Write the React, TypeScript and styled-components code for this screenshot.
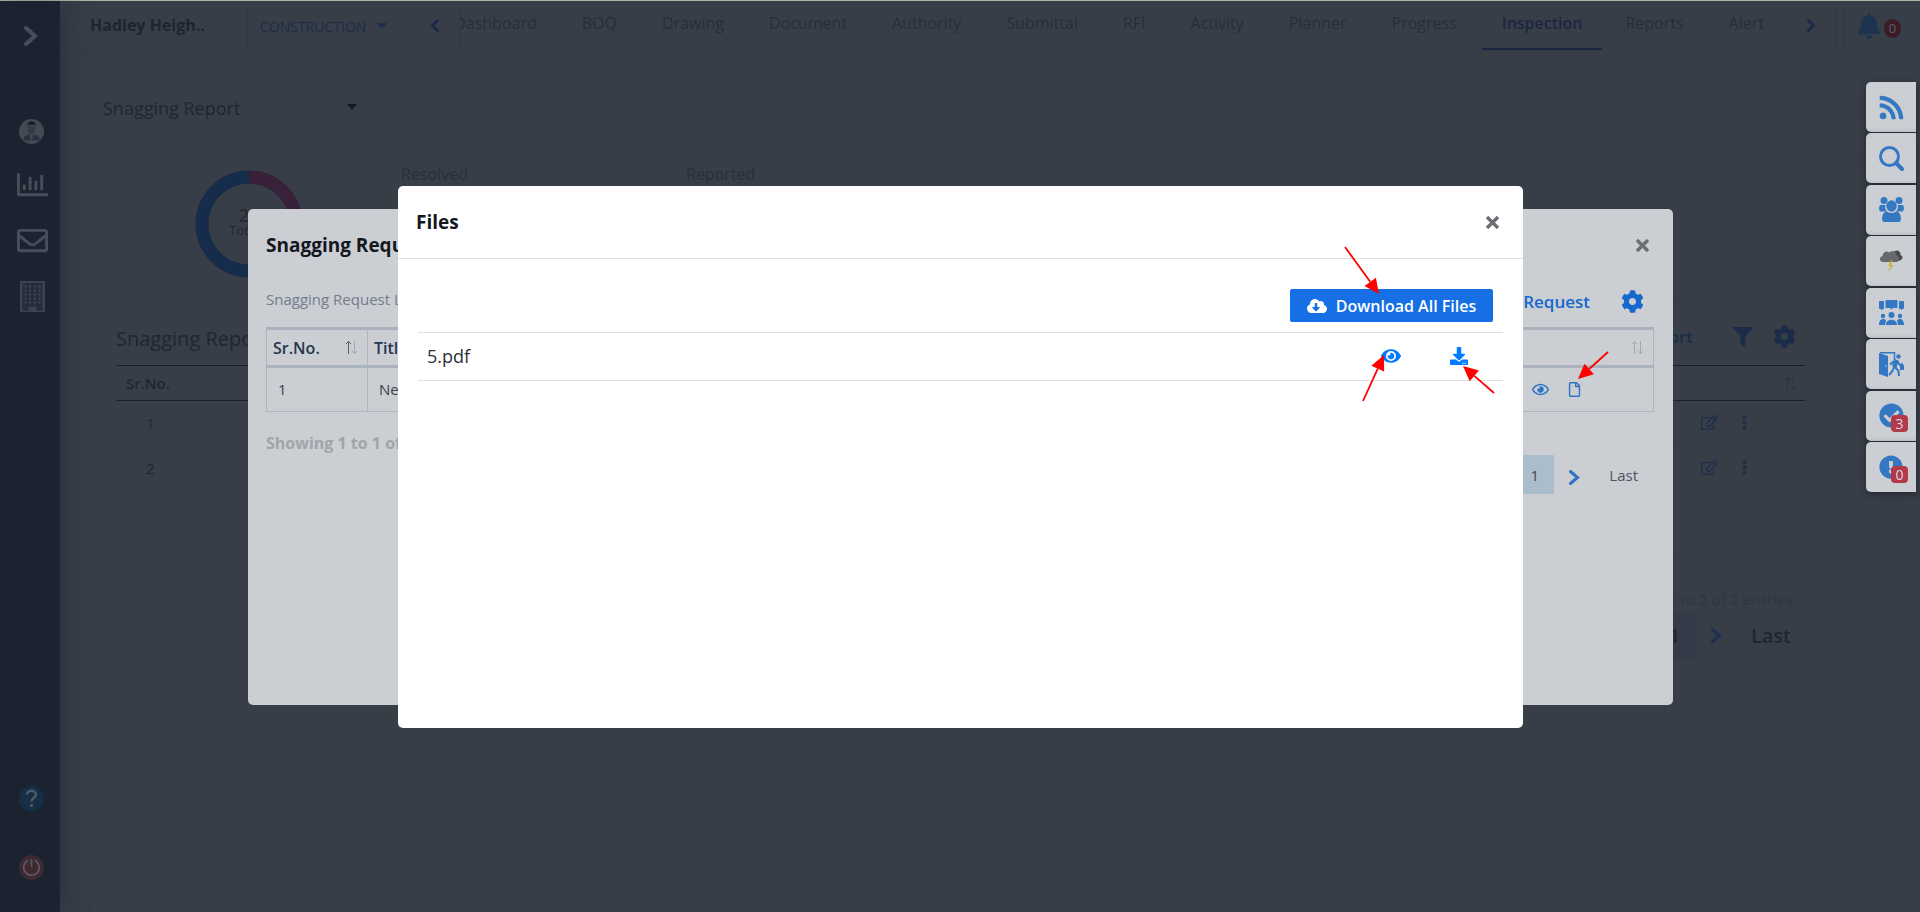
import React from 'react';
import styled, { createGlobalStyle } from 'styled-components';
import {
  FaBell, FaCheckCircle, FaCloudDownloadAlt, FaCog, FaDownload, FaEllipsisV, FaExclamationCircle,
  FaEye, FaFilter, FaRegChartBar, FaRegEdit, FaRegEnvelope, FaRegEye, FaRegFile, FaRss,
} from 'react-icons/fa';

const GlobalStyle = createGlobalStyle`
  *, *::before, *::after { box-sizing: border-box; }
  body { margin: 0; background: #383e48; color: #20262f; font: 400 16px/24px "Open Sans", "Noto Sans", sans-serif; overflow: hidden; }
  button, select { font: inherit; color: inherit; border: 0; background: none; padding: 0; margin: 0; cursor: pointer; }
  h1, h2, h3, p { margin: 0; font: inherit; }
  table { border-collapse: collapse; width: 100%; }
  svg { display: block; flex: none; }
`;

/* ---------- page frame ---------- */
const Page = styled.div`
  display: flex;
  min-height: 100vh;
  border-top: 1px solid #a9b99b;
`;
const Sidebar = styled.nav`
  width: 60px;
  flex: none;
  display: flex;
  flex-direction: column;
  background: #1c2330;
  color: #474e59;
  padding-bottom: 10px;
  box-shadow: 4px 0 28px rgba(20, 26, 36, 0.35);
`;
const SideButton = styled.button<{ $h: number }>`
  height: ${p => p.$h}px;
  width: 64px;
  display: flex;
  align-items: center;
  justify-content: center;
`;
const RoundButton = styled(SideButton)`
  width: 62px;
`;
const MenuToggle = styled(SideButton)`
  width: 60px;
`;
const SideGroup = styled.div`
  display: flex;
  flex-direction: column;
  padding-top: 34px;
`;
const SideFoot = styled(SideGroup)`
  margin-top: auto;
  padding-top: 0;
`;
const Main = styled.main`
  flex: 1;
  min-width: 0;
  display: flex;
  flex-direction: column;
`;

/* ---------- top bar ---------- */
const TopBar = styled.header`
  height: 50px;
  display: flex;
  border-bottom: 1px solid #343a43;
`;
const Project = styled.h1`
  width: 188px;
  padding: 12px 0 0 30px;
  border-right: 1px solid #343a43;
  font-weight: 700;
  color: #1e242e;
`;
const PhaseBox = styled.div`
  width: 162px;
  padding: 0 23px 0 12px;
  display: flex;
  align-items: center;
  color: #1d2c46;
`;
const PhaseSelect = styled.select`
  appearance: none;
  flex: 1;
  height: 48px;
  padding-top: 2px;
  font-size: 14px;
  font-weight: 500;
  outline: none;
`;
const TabArrow = styled.button`
  width: 50px;
  flex: none;
  display: flex;
  align-items: center;
  justify-content: center;
  border: solid #343a43;
  border-width: 0 1px;
  color: #1b2946;
`;
const Tabs = styled.div`
  flex: 1;
  min-width: 0;
  display: flex;
  justify-content: flex-end;
  overflow: hidden;
`;
const Tab = styled.button<{ $active?: boolean }>`
  flex: none;
  height: 50px;
  margin-left: ${p => (p.$active ? 3 : 0)}px;
  padding: ${p => (p.$active ? '0 20px 3px' : '0 22px 3px 23px')};
  border-bottom: ${p => (p.$active ? '3px solid #1b2742' : '3px solid transparent')};
  color: ${p => (p.$active ? '#1b2742' : '#272e38')};
  font-weight: ${p => (p.$active ? 600 : 400)};
`;
const BellBox = styled.button`
  width: 76px;
  margin-left: 8px;
  padding-left: 11px;
  display: flex;
  align-items: center;
  gap: 2px;
  border-left: 1px solid #343a43;
  color: #1d3450;
`;
const BellCount = styled.span`
  width: 17px;
  height: 19px;
  margin-top: 6px;
  border-radius: 9px;
  background: #3c1c27;
  color: #5c5f69;
  font-size: 13px;
  line-height: 19px;
`;

/* ---------- report card ---------- */
const Card = styled.section`
  flex: 1;
  margin: 30px 70px 0 30px;
  border: 1px solid #343a44;
  border-bottom: 0;
  display: flex;
  flex-direction: column;
`;
const CardHead = styled.div`
  height: 51px;
  border-bottom: 1px solid #343a43;
`;
const ReportPicker = styled.div`
  width: 284px;
  height: 50px;
  padding: 0 17px 0 12px;
  display: flex;
  align-items: center;
  border-right: 1px solid #343a43;
`;
const ReportSelect = styled.select`
  appearance: none;
  flex: 1;
  height: 50px;
  padding-top: 2px;
  font-size: 18px;
  outline: none;
`;
const Summary = styled.div`
  height: 166px;
  margin: 0 44px 0 25px;
  padding: 37px 0 0 79px;
  display: flex;
  border-bottom: 1px solid #343a43;
`;
const StatList = styled.div`
  display: flex;
  padding-left: 98px;
`;
const StatLabel = styled.span`
  width: 285px;
  margin-top: -8px;
  font-size: 16px;
  color: #292f39;
`;
const ListHead = styled.div`
  margin: 0 44px 0 25px;
  padding: 9px 9px 0 0;
  height: 66px;
  display: flex;
  align-items: center;
  color: #1b2c48;
`;
const ListTitle = styled.h2`
  flex: 1;
  font-size: 20px;
  color: #20262f;
  padding-top: 4px;
`;
const LinkButton = styled.button<{ $gap: number }>`
  font-size: 17px;
  font-weight: 600;
  margin-right: ${p => p.$gap}px;
`;
const IconButton = styled.button<{ $gap?: number }>`
  display: inline-flex;
  align-items: center;
  justify-content: center;
  margin-left: ${p => p.$gap || 0}px;
`;
const DimTable = styled.table`
  width: auto;
  margin: 0 44px 0 25px;
  font-size: 15px;
  th {
    height: 35px;
    padding: 0 8px 0 10px;
    text-align: left;
    font-weight: 600;
    border: solid #1a202a;
    border-width: 1px 0;
  }
  td {
    height: 45px;
    padding: 0 30px 1px;
    border-bottom: 1px solid #343a43;
  }
  tr:last-child td { border: 0; }
`;
const SortCell = styled.div<{ $end?: boolean }>`
  display: flex;
  align-items: center;
  justify-content: ${p => (p.$end ? 'flex-end' : 'space-between')};
`;
const DimActions = styled.div`
  display: flex;
  justify-content: flex-end;
  align-items: center;
  gap: 19px;
  padding-right: 23px;
  color: #1f2f48;
`;
const ListFoot = styled.div`
  margin: 66px 44px 0 25px;
  padding: 29px 12px 0 0;
  border-top: 1px solid #343a43;
  display: flex;
  flex-direction: column;
  align-items: flex-end;
  gap: 2px;
  font-size: 15px;
  font-weight: 600;
  color: #303741;
`;
const Pager = styled.div<{ $big?: boolean }>`
  display: flex;
  align-items: center;
  justify-content: flex-end;
  height: ${p => (p.$big ? 46 : 39)}px;
  padding-right: ${p => (p.$big ? 2 : 0)}px;
  font-size: ${p => (p.$big ? 20 : 15)}px;
  font-weight: ${p => (p.$big ? 600 : 400)};
  color: ${p => (p.$big ? '#20262f' : '#4e555f')};
`;
const PageNumber = styled.button<{ $big?: boolean }>`
  height: 100%;
  width: ${p => (p.$big ? 43 : 39)}px;
  color: ${p => (p.$big ? '#20262f' : '#3f4751')};
  background: ${p => (p.$big ? '#343a47' : '#abbccb')};
`;
const PageArrow = styled.button<{ $big?: boolean }>`
  padding: ${p => (p.$big ? '0 29px 0 14px' : '6px 29px 0 14px')};
  color: ${p => (p.$big ? '#1c3050' : '#2f74c4')};
`;

/* ---------- dialogs ---------- */
const DialogLayer = styled.div<{ $top: number }>`
  position: fixed;
  inset: 0;
  display: flex;
  justify-content: center;
  align-items: flex-start;
  padding: ${p => p.$top}px 15px 16px 16px;
`;
const RequestDialog = styled.section`
  width: 1425px;
  min-height: 496px;
  border-radius: 5px;
  background: #cbced3;
  padding: 0 19px 0 18px;
`;
const DialogHead = styled.div`
  display: flex;
  align-items: center;
  justify-content: space-between;
  height: 72px;
  color: #14181e;
`;
const DialogTitle = styled.h2`
  font-size: 19px;
  font-weight: 700;
`;
const CloseButton = styled.button`
  width: 13px;
  margin-right: 5px;
  color: #6b6e72;
`;
const RequestTools = styled.div`
  height: 46px;
  display: flex;
  align-items: center;
  padding: 0 10px 5px 0;
  font-size: 15px;
  color: #737d8c;
`;
const RequestLabel = styled.h3`
  flex: 1;
  padding-bottom: 5px;
`;
const BlueTools = styled.div`
  display: flex;
  align-items: center;
  color: #1668cd;
`;
const RequestTable = styled.table`
  table-layout: fixed;
  color: #3b424c;
  font-size: 15px;
  th, td { text-align: left; border: 1px solid #aeb5bd; }
  th {
    height: 38px;
    padding: 0 9px 0 6px;
    font-size: 16px;
    font-weight: 600;
    color: #27374f;
    border-top: 3px solid #aab3bd;
    border-bottom: 3px solid #aab3bd;
  }
  td { height: 45px; padding: 0 11px 1px; }
`;
const NumberCol = styled.col`
  width: 101px;
`;
const ActionCol = styled.col`
  width: 133px;
`;
const Actions = styled.div`
  display: flex;
  align-items: center;
  gap: 18px;
  color: #2f74c4;
`;
const Showing = styled.p`
  padding-top: 19px;
  font-weight: 700;
  color: #a1a4a8;
`;
const RequestPager = styled.div`
  padding: 0 16px 0 0;
`;
const FilesDialog = styled.section`
  position: relative;
  width: 1125px;
  min-height: 542px;
  border-radius: 5px;
  background: #fff;
  color: #14181e;
`;
const FilesHead = styled(DialogHead)`
  height: 73px;
  padding: 0 19px 0 18px;
  border-bottom: 1px solid #dcdfe5;
`;
const FilesBody = styled.div`
  padding: 30px 20px 0;
`;
const FilesBar = styled.div`
  display: flex;
  justify-content: flex-end;
  padding: 0 10px 10px 0;
`;
const DownloadAll = styled.button`
  height: 33px;
  width: 203px;
  display: flex;
  align-items: center;
  justify-content: center;
  gap: 9px;
  border-radius: 2px;
  background: #166fe5;
  color: #fff;
  font-size: 16px;
  font-weight: 600;
`;
const FileTable = styled.table`
  color: #2b3037;
  td {
    height: 48px;
    padding: 0 10px 2px 9px;
    border: solid #dcdfe5;
    border-width: 1px 0;
    font-size: 18px;
  }
`;
const FileActions = styled.div`
  display: flex;
  justify-content: flex-end;
  gap: 49px;
  padding-right: 25px;
  color: #007bff;
`;
const Notes = styled.svg`
  position: absolute;
  top: 0;
  right: -100px;
  z-index: 2;
  pointer-events: none;
`;

/* ---------- quick access rail ---------- */
const Rail = styled.aside`
  position: fixed;
  top: 82px;
  right: 4px;
  height: 410px;
  display: flex;
  flex-direction: column;
  justify-content: space-between;
`;
const RailButton = styled.button`
  position: relative;
  width: 50px;
  height: 50px;
  display: flex;
  align-items: center;
  justify-content: center;
  border-radius: 5px 0 0 5px;
  background: #cbced3;
  color: #3478c3;
  box-shadow: 0 2px 6px rgba(15, 20, 28, 0.5);
`;
const RailCount = styled.span`
  position: absolute;
  right: 8px;
  bottom: 9px;
  width: 17px;
  height: 17px;
  border-radius: 4px;
  background: #b23a4a;
  color: #dcdde2;
  font-size: 14px;
  line-height: 17px;
`;

/* ---------- drawings ---------- */
const Chevron = ({ w, h, stroke, left }: { w: number; h: number; stroke: number; left?: boolean }) => {
  const s = stroke / 2 + 1;
  const a = left ? w - s : s;
  const b = left ? s : w - s;
  return (
    <svg width={w} height={h} fill="none" stroke="currentColor" strokeWidth={stroke} strokeLinecap="round">
      <path d={`M${a} ${s}L${b} ${h / 2}L${a} ${h - s}`} />
    </svg>
  );
};
const Caret = ({ color }: { color: string }) => (
  <svg width="10" height="6" fill={color}><path d="M0 0h10L5 6z" /></svg>
);
const Cross = () => (
  <svg width="13" height="13" stroke="currentColor" strokeWidth="3.4"><path d="M1 1L12 12M12 1L1 12" /></svg>
);
const SortArrows = ({ up, down }: { up: string; down: string }) => (
  <svg width="13" height="15" fill="none" strokeWidth="1">
    <path stroke={up} d="M3.5 14V1.5M1 4L3.5 1.5L6 4" />
    <path stroke={down} d="M9.500 1V13.500M7 11L9.500 13.500L12 11" />
  </svg>
);
const Avatar = () => (
  <svg width="25" height="25" viewBox="0 0 25 25">
    <circle cx="12.500" cy="12.500" r="12.500" fill="#424a55" />
    <path d="M4 21.500c.5-4 3-5 6-6l2.500 3 2.500-3c3 1 5.500 2 6 6z" fill="#2a323e" />
    <path d="M8.800 7h7.400v3.500c0 2.500-1.700 5-3.700 5s-3.700-2.500-3.700-5z" fill="#343c47" />
    <path d="M8.500 7.500c-.5-3.500 1.500-5 4-5s4.500 1.500 4 5l-1-1.800h-6z" fill="#161c26" />
    <path d="M12.500 16.500l1.200 1.500-1.200 4-1.200-4z" fill="#48505b" />
  </svg>
);
const Building = () => (
  <svg width="25" height="31" viewBox="0 0 25 31">
    <path d="M0 0h25v31H0z" fill="#3b434f" />
    <path d="M2.500 2h20v27.500h-6v-4h-8v4h-6z" fill="#252d3a" />
    <g fill="#3f4753">
      {[4.5, 8.500, 12.500, 16.500, 20.500].map(y => [4.500, 9, 14, 18.500].map(x => <rect key={`${x}-${y}`} x={x} y={y} width="2" height="2" />))}
    </g>
  </svg>
);
const Help = () => (
  <svg width="25" height="25" viewBox="0 0 25 25" fill="none">
    <circle cx="12.500" cy="12.500" r="12.500" fill="#172f46" />
    <path d="M8 8.500C8 3.500 17 3.500 17 8.500c0 3.500-4.500 3.500-4.500 7" stroke="#505a66" strokeWidth="2.400" />
    <circle cx="12.500" cy="19.500" r="1.600" fill="#505a66" />
  </svg>
);
const Power = () => (
  <svg width="25" height="25" viewBox="0 0 25 25" fill="none">
    <circle cx="12.500" cy="12.500" r="12.500" fill="#3f2a32" />
    <path d="M9 5.500a7.800 7.800 0 1 0 7 0M12.500 4v8" stroke="#5a5a64" strokeWidth="1.600" />
  </svg>
);
const Donut = () => (
  <svg width="108" height="108" viewBox="0 0 108 108">
    <circle cx="54" cy="54" r="47" fill="none" stroke="#152c4a" strokeWidth="13" />
    <path d="M54 7a47 47 0 0 1 0 94" fill="none" stroke="#382139" strokeWidth="13" />
    <text x="49" y="52" fontSize="18" textAnchor="middle" fill="#20262f">2</text>
    <text x="34" y="65" fontSize="13" fill="#20262f">Total</text>
  </svg>
);
const SearchIcon = () => (
  <svg width="25" height="25" fill="none" stroke="currentColor">
    <circle cx="10.500" cy="10.500" r="9" strokeWidth="3" />
    <path d="M17 17l6 6" strokeWidth="4" strokeLinecap="round" />
  </svg>
);
const PeopleIcon = () => (
  <svg width="25" height="25" viewBox="0 0 25 25" fill="currentColor">
    <circle cx="5" cy="3.500" r="3.500" />
    <circle cx="20" cy="3.500" r="3.500" />
    <path d="M1.500 8h5c-1 3 0 5 1.500 6.500H1.500C-.5 13.500-.3 9 1.500 8zM23.500 8h-5c1 3 0 5-1.500 6.500h6.500c2-1 1.800-5.500 0-6.500z" />
    <ellipse cx="12.500" cy="9" rx="5.200" ry="5.800" />
    <path d="M7.500 14.300c3 2.400 7 2.400 10 0 3.500.7 4.700 5 4.300 8.700 0 1.200-1 2-2.300 2h-14c-1.300 0-2.300-.8-2.300-2-.4-3.700.8-8 4.300-8.700z" />
  </svg>
);
const StormIcon = () => (
  <svg width="25" height="25" viewBox="0 0 25 25">
    <path d="M13 6c1-6 9-6 8.500 0 2.500 1 2.500 3.500 1 4.500L20 12z" fill="#47494c" />
    <path d="M4 13c-4-.5-4-5-.5-6C3.500 3 8 1 10 3.500c3-3 8-.5 7.500 3 3 .5 3.500 6 .5 6.500z" fill="#67696d" />
    <path d="M11.500 11.500l-2 5.500h2.500l-5 8 7.500-9h-3l2-4.500z" fill="#ccae22" />
  </svg>
);
const MeetingIcon = () => (
  <svg width="25" height="25" viewBox="0 0 25 25" fill="currentColor">
    <path d="M7.500 0h10c.6 0 1 .4 1 1v6c0 .6-.4 1-1 1H14l-1.500 1.600L11 8H7.500c-.6 0-1-.4-1-1V1c0-.6.400-1 1-1z" />
    <path d="M1 1h4v8H3.500L2 10.600V9H1c-.6 0-1-.4-1-1V2c0-.6.400-1 1-1zM24 1h-4v8h1.500l1.500 1.600V9h1c.6 0 1-.4 1-1V2c0-.6-.4-1-1-1z" />
    <circle cx="12.500" cy="15" r="3" />
    <circle cx="4" cy="16" r="2.200" />
    <circle cx="21" cy="16" r="2.200" />
    <path d="M7 25c0-7 11-7 11 0zM0 25c0-6.500 5-7 7-4.500L6 25zM25 25c0-6.500-5-7-7-4.500l1 4.500z" />
  </svg>
);
const ExitIcon = () => (
  <svg width="25" height="25" viewBox="0 0 25 25" fill="none" stroke="currentColor">
    <path d="M0 1l9 3v21l-9-3z" fill="currentColor" stroke="none" />
    <path d="M1 .8h14.500V8" strokeWidth="1.500" />
    <circle cx="19.500" cy="4.500" r="2.200" fill="currentColor" stroke="none" />
    <path d="M18 8l-3 7" strokeWidth="4.500" />
    <path d="M15 9l-4 3.500M18 9l3 4 3-1M15 15l-1.500 4-3.500 4M16 15l3.500 4 .5 5" strokeWidth="2" />
    <path d="M21 13h4v5h-4z" fill="currentColor" stroke="none" />
    <circle cx="6.800" cy="14" r=".8" fill="#cbced3" stroke="none" />
  </svg>
);

const tabs = ['Dashboard', 'BOQ', 'Drawing', 'Document', 'Authority', 'Submittal', 'RFI', 'Activity', 'Planner', 'Progress', 'Inspection', 'Reports', 'Alert'];

const rail = [
  { name: 'Feed', icon: <FaRss size={27} /> },
  { name: 'Search', icon: <SearchIcon /> },
  { name: 'Team', icon: <PeopleIcon /> },
  { name: 'Weather', icon: <StormIcon /> },
  { name: 'Meetings', icon: <MeetingIcon /> },
  { name: 'Check out', icon: <ExitIcon /> },
  { name: 'Approvals', icon: <FaCheckCircle size={25} />, count: 3 },
  { name: 'Alerts', icon: <FaExclamationCircle size={24} />, count: 0 },
];

const arrows = [
  { from: [22, 61], to: [56, 108] },
  { from: [40, 215], to: [61, 169] },
  { from: [171, 207], to: [140, 180] },
  { from: [285, 166], to: [255, 193] },
];

const Arrow = ({ from, to }: { from: number[]; to: number[] }) => {
  const d = Math.hypot(to[0] - from[0], to[1] - from[1]);
  const ux = (to[0] - from[0]) / d;
  const uy = (to[1] - from[1]) / d;
  const bx = to[0] - ux * 15;
  const by = to[1] - uy * 15;
  return (
    <g fill="#f00" stroke="none">
      <path d={`M${from[0]} ${from[1]}L${bx} ${by}`} stroke="#f00" strokeWidth="1.800" />
      <path d={`M${to[0]} ${to[1]}L${bx - uy * 7} ${by + ux * 7}L${bx + uy * 7} ${by - ux * 7}z`} />
    </g>
  );
};

export default function App() {
  return (
    <>
      <GlobalStyle />
      <Page>
        <Sidebar aria-label="Main menu">
          <MenuToggle $h={69} aria-label="Expand menu"><Chevron w={15} h={22} stroke={4} /></MenuToggle>
          <SideGroup>
            <RoundButton $h={55} aria-label="Profile"><Avatar /></RoundButton>
            <SideButton $h={51} aria-label="Statistics"><FaRegChartBar size={31} /></SideButton>
            <SideButton $h={61} aria-label="Messages"><FaRegEnvelope size={31} /></SideButton>
            <SideButton $h={51} aria-label="Company"><Building /></SideButton>
          </SideGroup>
          <SideFoot>
            <RoundButton $h={69} aria-label="Help"><Help /></RoundButton>
            <RoundButton $h={69} aria-label="Sign out"><Power /></RoundButton>
          </SideFoot>
        </Sidebar>
        <Main>
          <TopBar>
            <Project>Hadley Heigh..</Project>
            <PhaseBox>
              <PhaseSelect aria-label="Phase"><option>CONSTRUCTION</option></PhaseSelect>
              <Caret color="#1d2f4c" />
            </PhaseBox>
            <TabArrow aria-label="Previous tabs"><Chevron w={10} h={15} stroke={3} left /></TabArrow>
            <Tabs>{tabs.map(t => <Tab key={t} $active={t === 'Inspection'}>{t}</Tab>)}</Tabs>
            <TabArrow aria-label="Next tabs"><Chevron w={10} h={15} stroke={3} /></TabArrow>
            <BellBox aria-label="Notifications"><FaBell size={26} /><BellCount>0</BellCount></BellBox>
          </TopBar>
          <Card>
            <CardHead>
              <ReportPicker>
                <ReportSelect aria-label="Report type"><option>Snagging Report</option></ReportSelect>
                <Caret color="#141a23" />
              </ReportPicker>
            </CardHead>
            <Summary>
              <Donut />
              <StatList>
                <StatLabel>Resolved</StatLabel>
                <StatLabel>Reported</StatLabel>
              </StatList>
            </Summary>
            <ListHead>
              <ListTitle>Snagging Report</ListTitle>
              <LinkButton $gap={40}>Report</LinkButton>
              <IconButton aria-label="Filter"><FaFilter size={20} /></IconButton>
              <IconButton $gap={20} aria-label="Settings"><FaCog size={23} /></IconButton>
            </ListHead>
            <DimTable>
              <thead>
                <tr>
                  <th>Sr.No.</th>
                  <th><SortCell $end><SortArrows up="#2c323c" down="#2c323c" /></SortCell></th>
                </tr>
              </thead>
              <tbody>
                {[1, 2].map(n => (
                  <tr key={n}>
                    <td>{n}</td>
                    <td>
                      <DimActions>
                        <IconButton aria-label="Edit"><FaRegEdit size={17} /></IconButton>
                        <IconButton aria-label="More"><FaEllipsisV size={15} /></IconButton>
                      </DimActions>
                    </td>
                  </tr>
                ))}
              </tbody>
            </DimTable>
            <ListFoot>
              <p>1 to 2 of 2 entries</p>
              <Pager $big>
                <PageNumber $big>1</PageNumber>
                <PageArrow $big aria-label="Next page"><Chevron w={12} h={17} stroke={3} /></PageArrow>
                <button>Last</button>
              </Pager>
            </ListFoot>
          </Card>
        </Main>
      </Page>

      <Rail aria-label="Quick access">
        {rail.map(r => (
          <RailButton key={r.name} aria-label={r.name}>
            {r.icon}
            {r.count !== undefined && <RailCount>{r.count}</RailCount>}
          </RailButton>
        ))}
      </Rail>

      <DialogLayer $top={209}>
        <RequestDialog role="dialog" aria-label="Snagging Request">
          <DialogHead>
            <DialogTitle>Snagging Request</DialogTitle>
            <CloseButton aria-label="Close"><Cross /></CloseButton>
          </DialogHead>
          <RequestTools>
            <RequestLabel>Snagging Request List</RequestLabel>
            <BlueTools>
              <LinkButton $gap={31}>Request</LinkButton>
              <IconButton aria-label="Settings"><FaCog size={23} /></IconButton>
            </BlueTools>
          </RequestTools>
          <RequestTable>
            <colgroup><NumberCol /><col /><ActionCol /></colgroup>
            <thead>
              <tr>
                <th><SortCell>Sr.No.<SortArrows up="#6b5b5b" down="#a3a8ae" /></SortCell></th>
                <th>Title</th>
                <th><SortCell $end><SortArrows up="#a3a8ae" down="#a3a8ae" /></SortCell></th>
              </tr>
            </thead>
            <tbody>
              <tr>
                <td>1</td>
                <td>New</td>
                <td>
                  <Actions>
                    <IconButton aria-label="View"><FaRegEye size={17} /></IconButton>
                    <IconButton aria-label="Files"><FaRegFile size={15} /></IconButton>
                  </Actions>
                </td>
              </tr>
            </tbody>
          </RequestTable>
          <Showing>Showing 1 to 1 of 1 entries</Showing>
          <RequestPager>
            <Pager>
              <PageNumber>1</PageNumber>
              <PageArrow aria-label="Next page"><Chevron w={12} h={17} stroke={3} /></PageArrow>
              <button>Last</button>
            </Pager>
          </RequestPager>
        </RequestDialog>
      </DialogLayer>

      <DialogLayer $top={186}>
        <FilesDialog role="dialog" aria-label="Files">
          <FilesHead>
            <DialogTitle>Files</DialogTitle>
            <CloseButton aria-label="Close"><Cross /></CloseButton>
          </FilesHead>
          <FilesBody>
            <FilesBar>
              <DownloadAll><FaCloudDownloadAlt size={20} />Download All Files</DownloadAll>
            </FilesBar>
            <FileTable>
              <tbody>
                <tr>
                  <td>5.pdf</td>
                  <td>
                    <FileActions>
                      <IconButton aria-label="View 5.pdf"><FaEye size={20} /></IconButton>
                      <IconButton aria-label="Download 5.pdf"><FaDownload size={18} /></IconButton>
                    </FileActions>
                  </td>
                </tr>
              </tbody>
            </FileTable>
          </FilesBody>
          <Notes width="300" height="240" aria-hidden="true">
            {arrows.map(a => <Arrow key={a.from[0]} from={a.from} to={a.to} />)}
          </Notes>
        </FilesDialog>
      </DialogLayer>
    </>
  );
}
